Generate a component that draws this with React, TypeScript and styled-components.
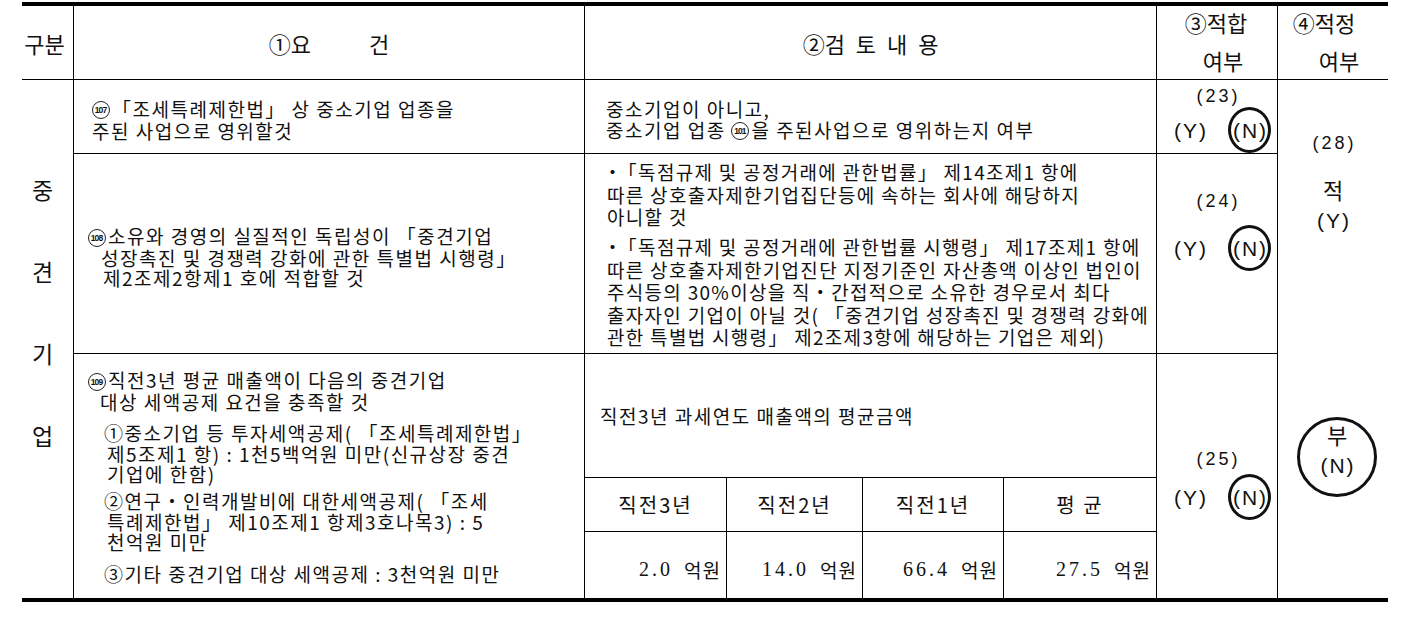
import React from "react";
import styled, { createGlobalStyle } from "styled-components";

const GlobalStyle = createGlobalStyle`
  html, body {
    margin: 0;
    padding: 0;
    background: #fff;
  }
  body {
    font-family: "Noto Sans CJK KR", "Noto Sans", sans-serif;
    color: #111;
  }
`;

const Page = styled.div`
  padding: 2px 0 0 22px;
`;

const Sheet = styled.div`
  display: grid;
  width: 1366px;
  grid-template-columns: 52px 511px 142px 136px 141px 153px 121px 110px;
  grid-template-rows: 74px 74px 200px 124px 54px 66px;
  border-top: 4px solid #000;
  border-bottom: 4px solid #000;
`;

type CellProps = { $col: string; $row: string; $r?: boolean; $b?: boolean };

const Cell = styled.div<CellProps>`
  grid-column: ${(p) => p.$col};
  grid-row: ${(p) => p.$row};
  box-sizing: border-box;
  min-width: 0;
  border-right: ${(p) => (p.$r ? "1px solid #000" : "0")};
  border-bottom: ${(p) => (p.$b ? "1px solid #000" : "0")};
`;

const HeadCell = styled(Cell)<{ $pr?: number }>`
  display: flex;
  align-items: center;
  justify-content: center;
  padding-right: ${(p) => p.$pr ?? 0}px;
  font-size: 22px;
  line-height: 22px;
  white-space: nowrap;
  word-spacing: 6px;
`;

const Wide = styled.span`
  margin-left: 58px;
`;

const StackHead = styled(Cell)`
  display: flex;
  flex-direction: column;
  align-items: center;
  padding-top: 5px;
  gap: 16px;
  font-size: 22px;
  line-height: 22px;
  white-space: nowrap;
`;

const HeadLine = styled.span<{ $dx?: number }>`
  margin-left: ${(p) => ((p.$dx ?? 0) > 0 ? 2 * (p.$dx ?? 0) : 0)}px;
  margin-right: ${(p) => ((p.$dx ?? 0) < 0 ? -2 * (p.$dx ?? 0) : 0)}px;
`;

const SideCell = styled(Cell)`
  display: flex;
  flex-direction: column;
  align-items: center;
  padding: 98px 10px 0 0;
  gap: 59px;
  font-size: 23px;
  line-height: 23px;
`;

const TextCell = styled(Cell)<{ $pl: number; $pt?: number; $lh: number; $ls?: number; $center?: boolean }>`
  display: flex;
  flex-direction: column;
  justify-content: ${(p) => (p.$center ? "center" : "flex-start")};
  padding: ${(p) => p.$pt ?? 0}px 0 0 ${(p) => p.$pl}px;
  font-size: 19px;
  line-height: ${(p) => p.$lh}px;
  letter-spacing: ${(p) => p.$ls ?? 1.5}px;
  white-space: nowrap;
`;

const Line = styled.div<{ $indent?: number; $gap?: number }>`
  margin-left: ${(p) => p.$indent ?? 0}px;
  margin-top: ${(p) => p.$gap ?? 0}px;
`;

const Bullet = styled.span`
  margin-right: 4px;
`;

const Circ = styled.span`
  display: inline-block;
  box-sizing: border-box;
  width: 18px;
  height: 18px;
  margin-right: 2px;
  border: 1px solid #222;
  border-radius: 50%;
  font-family: "Liberation Sans", sans-serif;
  font-size: 8.5px;
  font-weight: bold;
  letter-spacing: -0.9px;
  line-height: 16px;
  text-align: center;
  text-indent: -1px;
  vertical-align: middle;
  position: relative;
  top: -1px;
`;

const SubHead = styled(Cell)`
  display: flex;
  align-items: center;
  justify-content: center;
  font-size: 20px;
  letter-spacing: 2px;
  white-space: nowrap;
`;

const Amount = styled(Cell)`
  display: flex;
  align-items: center;
  justify-content: flex-end;
  padding: 8px 5px 0 0;
  font-size: 19px;
  letter-spacing: 1px;
  white-space: nowrap;
`;

const Figure = styled.span`
  font-family: "Liberation Serif", serif;
  font-size: 20px;
  letter-spacing: 3px;
  margin-right: 11px;
`;

const Judge = styled(Cell)<{ $pt: number; $gap: number }>`
  display: flex;
  flex-direction: column;
  align-items: center;
  padding-top: ${(p) => p.$pt}px;
  gap: ${(p) => p.$gap}px;
  font-family: "Liberation Sans", sans-serif;
`;

const Num = styled.div`
  font-size: 18px;
  line-height: 18px;
  letter-spacing: 3px;
  padding-left: 3px;
`;

const Choice = styled.div`
  display: flex;
  align-items: center;
  gap: 20px;
  margin-left: 9px;
`;

const Mark = styled.span`
  font-family: "Liberation Sans", sans-serif;
  font-size: 21px;
  line-height: 21px;
  letter-spacing: 2px;
  padding-left: 2px;
`;

const Ring = styled.span`
  display: flex;
  align-items: center;
  justify-content: center;
  box-sizing: border-box;
  width: 43px;
  height: 46px;
  border: 3px solid #111;
  border-radius: 50%;
`;

const Verdict = styled(Cell)`
  display: flex;
  flex-direction: column;
  align-items: center;
  padding-top: 54px;
  font-family: "Liberation Sans", sans-serif;
`;

const VerdictWord = styled.div<{ $gap: number }>`
  margin-top: ${(p) => p.$gap}px;
  font-family: "Noto Sans CJK KR", sans-serif;
  font-size: 22px;
  line-height: 22px;
`;

const VerdictMark = styled(Mark)<{ $gap: number }>`
  margin-top: ${(p) => p.$gap}px;
`;

const BigRing = styled.div`
  display: flex;
  flex-direction: column;
  align-items: center;
  justify-content: center;
  gap: 10px;
  box-sizing: border-box;
  width: 80px;
  height: 80px;
  margin: 186px 0 0 8px;
  padding-bottom: 16px;
  border: 3px solid #111;
  border-radius: 50%;
`;

const RingWord = styled.div`
  font-family: "Noto Sans CJK KR", sans-serif;
  font-size: 22px;
  line-height: 22px;
`;

const years = [
  { label: "직전3년", value: "2.0" },
  { label: "직전2년", value: "14.0" },
  { label: "직전1년", value: "66.4" },
  { label: "평 균", value: "27.5" },
];

const YesNo = ({ n, pt, gap, row, last }: { n: number; pt: number; gap: number; row: string; last?: boolean }) => (
  <Judge $col="7" $row={row} $r $b={!last} $pt={pt} $gap={gap}>
    <Num>({n})</Num>
    <Choice>
      <Mark>(Y)</Mark>
      <Ring>
        <Mark>(N)</Mark>
      </Ring>
    </Choice>
  </Judge>
);

export default function App() {
  return (
    <>
      <GlobalStyle />
      <Page>
        <Sheet>
          <HeadCell $col="1" $row="1" $r $b $pr={6}>구분</HeadCell>
          <HeadCell $col="2" $row="1" $r $b>
            ①요<Wide>건</Wide>
          </HeadCell>
          <HeadCell $col="3 / 7" $row="1" $r $b>②검 토 내 용</HeadCell>
          <StackHead $col="7" $row="1" $r $b>
            <HeadLine $dx={-1}>③적합</HeadLine>
            <HeadLine $dx={6}>여부</HeadLine>
          </StackHead>
          <StackHead $col="8" $row="1" $b>
            <HeadLine $dx={-9}>④적정</HeadLine>
            <HeadLine $dx={6}>여부</HeadLine>
          </StackHead>

          <SideCell $col="1" $row="2 / span 5" $r>
            <span>중</span>
            <span>견</span>
            <span>기</span>
            <span>업</span>
          </SideCell>

          <TextCell $col="2" $row="2" $r $b $pl={18} $pt={6} $lh={21} $center>
            <Line>
              <Circ>107</Circ>「조세특례제한법」 상 중소기업 업종을
            </Line>
            <Line>주된 사업으로 영위할것</Line>
          </TextCell>
          <TextCell $col="3 / 7" $row="2" $r $b $pl={21} $pt={6} $lh={21} $center>
            <Line>중소기업이 아니고,</Line>
            <Line>
              중소기업 업종 <Circ>101</Circ>을 주된사업으로 영위하는지 여부
            </Line>
          </TextCell>
          <YesNo n={23} pt={7} gap={2} row="2" />

          <Verdict $col="8" $row="2 / span 5">
            <Num>(28)</Num>
            <VerdictWord $gap={26}>적</VerdictWord>
            <VerdictMark $gap={10}>(Y)</VerdictMark>
            <BigRing>
              <RingWord>부</RingWord>
              <Mark>(N)</Mark>
            </BigRing>
          </Verdict>

          <TextCell $col="2" $row="3" $r $b $pl={14} $pt={7} $lh={20} $center>
            <Line>
              <Circ>108</Circ>소유와 경영의 실질적인 독립성이 「중견기업
            </Line>
            <Line $indent={13}>성장촉진 및 경쟁력 강화에 관한 특별법 시행령」</Line>
            <Line $indent={15}>제2조제2항제1 호에 적합할 것</Line>
          </TextCell>
          <TextCell $col="3 / 7" $row="3" $r $b $pl={18} $pt={7} $lh={22.5} $ls={1.3}>
            <Line>
              <Bullet>・</Bullet>「독점규제 및 공정거래에 관한법률」 제14조제1 항에
            </Line>
            <Line $indent={4}>따른 상호출자제한기업집단등에 속하는 회사에 해당하지</Line>
            <Line $indent={4}>아니할 것</Line>
            <Line $gap={7.5}>
              <Bullet>・</Bullet>「독점규제 및 공정거래에 관한법률 시행령」 제17조제1 항에
            </Line>
            <Line $indent={4}>따른 상호출자제한기업진단 지정기준인 자산총액 이상인 법인이</Line>
            <Line $indent={4}>주식등의 30%이상을 직・간접적으로 소유한 경우로서 최다</Line>
            <Line $indent={4}>출자자인 기업이 아닐 것( 「중견기업 성장촉진 및 경쟁력 강화에</Line>
            <Line $indent={4}>관한 특별법 시행령」 제2조제3항에 해당하는 기업은 제외)</Line>
          </TextCell>
          <YesNo n={24} pt={38} gap={15} row="3" />

          <TextCell $col="2" $row="4 / span 3" $r $pl={14} $pt={16} $lh={20.5}>
            <Line>
              <Circ>109</Circ>직전3년 평균 매출액이 다음의 중견기업
            </Line>
            <Line $indent={12}>대상 세액공제 요건을 충족할 것</Line>
            <Line $indent={16} $gap={11}>①중소기업 등 투자세액공제( 「조세특례제한법」</Line>
            <Line $indent={19}>제5조제1 항) : 1천5백억원 미만(신규상장 중견</Line>
            <Line $indent={19}>기업에 한함)</Line>
            <Line $indent={16} $gap={6.5}>②연구・인력개발비에 대한세액공제( 「조세</Line>
            <Line $indent={19}>특례제한법」 제10조제1 항제3호나목3) : 5</Line>
            <Line $indent={19}>천억원 미만</Line>
            <Line $indent={16} $gap={11.5}>③기타 중견기업 대상 세액공제 : 3천억원 미만</Line>
          </TextCell>
          <TextCell $col="3 / 7" $row="4" $r $b $pl={15} $lh={21} $center>
            <Line>직전3년 과세연도 매출액의 평균금액</Line>
          </TextCell>
          {years.map((y, i) => (
            <SubHead key={y.label} $col={String(3 + i)} $row="5" $r $b>
              {y.label}
            </SubHead>
          ))}
          {years.map((y, i) => (
            <Amount key={y.value} $col={String(3 + i)} $row="6" $r>
              <Figure>{y.value}</Figure>억원
            </Amount>
          ))}
          <YesNo n={25} pt={96} gap={6} row="4 / span 3" last />
        </Sheet>
      </Page>
    </>
  );
}
